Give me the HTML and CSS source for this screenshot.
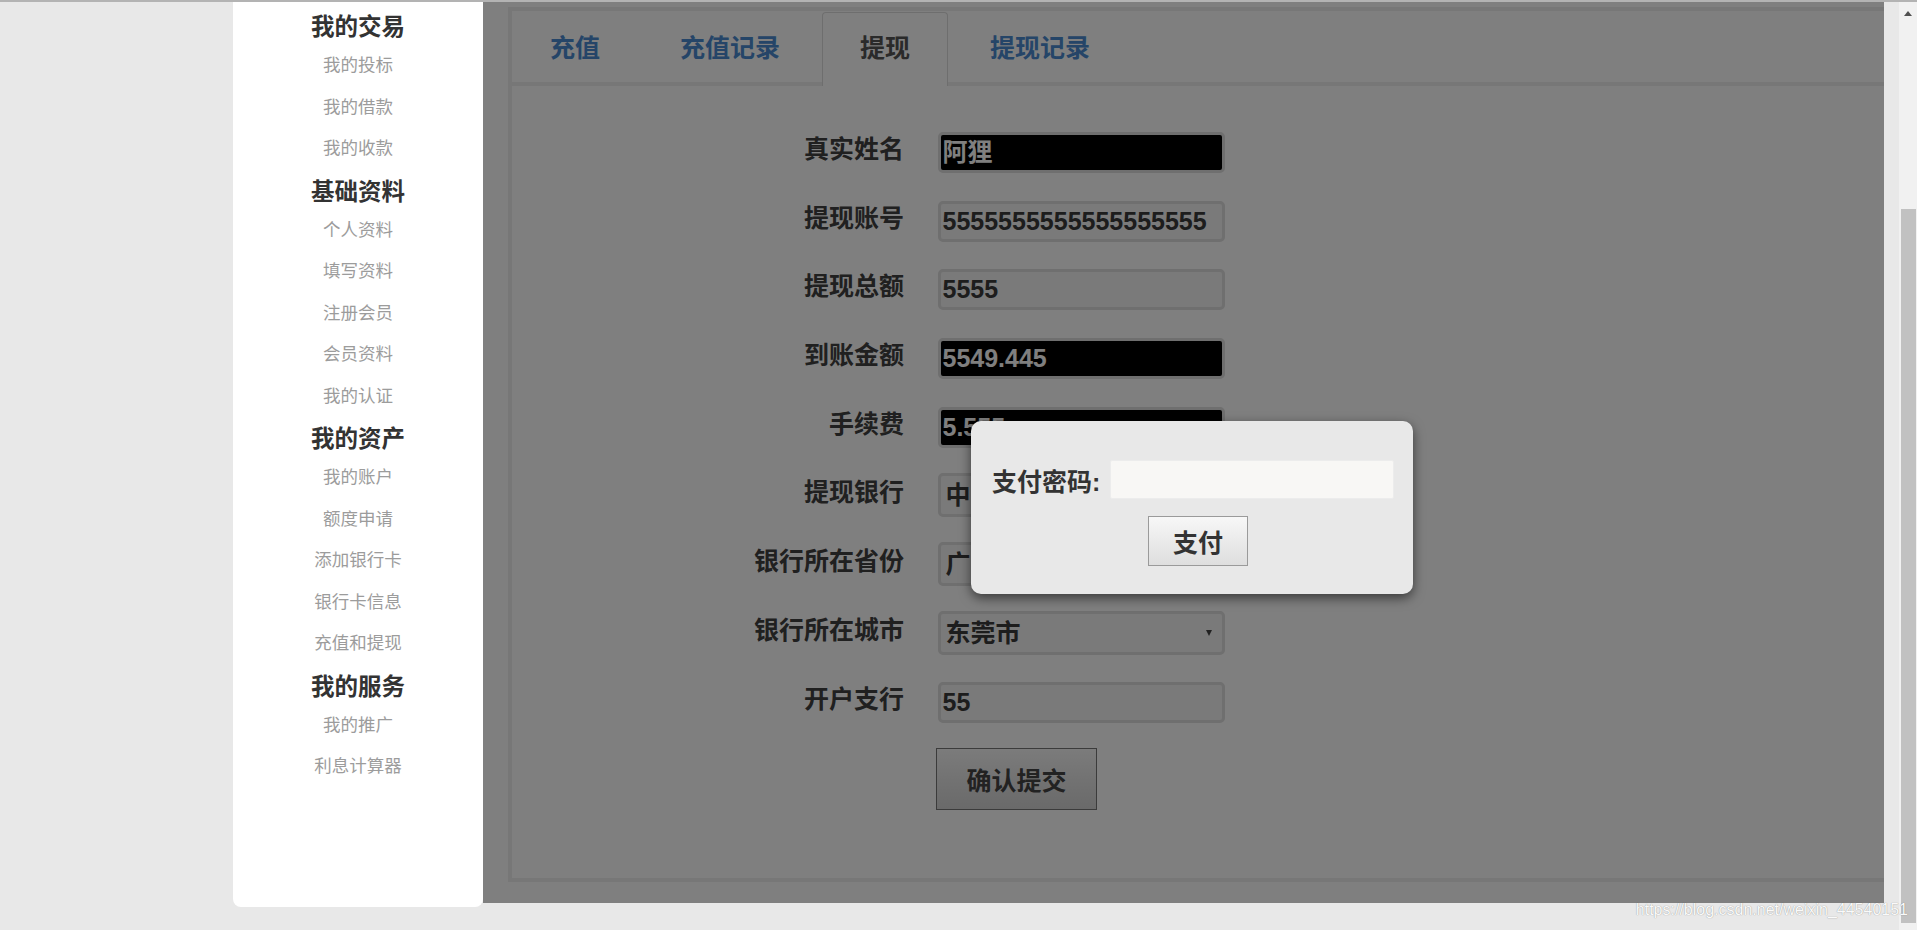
FILE: index.html
```html
<!DOCTYPE html>
<html lang="zh-CN">
<head>
<meta charset="utf-8">
<title>提现</title>
<link rel="stylesheet" href="styles.css">
</head>
<body>
<div class="window">
  <div class="page">
    <aside class="sidebar">
      <h3 class="side-title">我的交易</h3>
      <a class="side-link">我的投标</a>
      <a class="side-link">我的借款</a>
      <a class="side-link">我的收款</a>
      <h3 class="side-title">基础资料</h3>
      <a class="side-link">个人资料</a>
      <a class="side-link">填写资料</a>
      <a class="side-link">注册会员</a>
      <a class="side-link">会员资料</a>
      <a class="side-link">我的认证</a>
      <h3 class="side-title">我的资产</h3>
      <a class="side-link">我的账户</a>
      <a class="side-link">额度申请</a>
      <a class="side-link">添加银行卡</a>
      <a class="side-link">银行卡信息</a>
      <a class="side-link">充值和提现</a>
      <h3 class="side-title">我的服务</h3>
      <a class="side-link">我的推广</a>
      <a class="side-link">利息计算器</a>
    </aside>
    <main class="main">
      <div class="panel">
        <ul class="tabs">
          <li class="tab">充值</li>
          <li class="tab">充值记录</li>
          <li class="tab active">提现</li>
          <li class="tab">提现记录</li>
        </ul>
        <div class="form">
          <div class="label">真实姓名</div><div class="field dark">阿狸</div>
          <div class="label">提现账号</div><div class="field">5555555555555555555</div>
          <div class="label">提现总额</div><div class="field">5555</div>
          <div class="label">到账金额</div><div class="field dark">5549.445</div>
          <div class="label">手续费</div><div class="field dark">5.555</div>
          <div class="label">提现银行</div><div class="field select">中国银行</div>
          <div class="label">银行所在省份</div><div class="field select">广东省</div>
          <div class="label">银行所在城市</div><div class="field select">东莞市</div>
          <div class="label">开户支行</div><div class="field">55</div>
          <div class="label"></div><div class="actions"><button class="submit" type="button">确认提交</button></div>
        </div>
      </div>
      <div class="overlay"></div>
      <div class="modal">
        <div class="modal-row">
          <span class="modal-label">支付密码:</span>
          <span class="modal-input"></span>
        </div>
        <button class="pay" type="button">支付</button>
      </div>
    </main>
    <div class="gutter"></div>
  </div>
  <div class="scrollbar">
    <div class="sb-up"></div>
    <div class="sb-thumb"></div>
  </div>
</div>
<div class="watermark">https://blog.csdn.net/weixin_44540151</div>
</body>
</html>
```

FILE: styles.css
```css
* { box-sizing: border-box; }
html, body {
  margin: 0;
  height: 930px;
  overflow: hidden;
}
body {
  background: #e8e8e8;
  font-family: "Liberation Sans", "Noto Sans CJK SC", sans-serif;
  position: relative;
}
.window {
  display: flex;
  height: 930px;
  border-top: 2px solid #b3b3b3;
}
.page {
  flex: 1;
  display: flex;
  align-items: flex-start;
  padding-left: 233px;
}

/* sidebar */
.sidebar {
  width: 250px;
  height: 905px;
  background: #fff;
  border-radius: 0 0 8px 8px;
  display: flex;
  flex-direction: column;
  align-items: center;
  padding-top: 3px;
}
.side-title {
  margin: 4px 0 0;
  font-size: 23.5px;
  line-height: 36px;
  font-weight: bold;
  color: #333;
}
.side-link {
  font-size: 17.5px;
  line-height: 41.5px;
  color: #9c9c9c;
}

/* main */
.main {
  width: 1401px;
  height: 901px;
  background: #fff;
  position: relative;
  overflow: hidden;
}
.panel {
  margin: 5px -20px 0 25px;
  height: 875px;
  border: 4px solid #eee;
}
.tabs {
  display: flex;
  gap: 4px;
  margin: 0;
  padding: 1px 0 0;
  list-style: none;
  height: 75px;
  border-bottom: 4px solid #eee;
}
.tab {
  height: 70px;
  padding: 0 38px;
  line-height: 72px;
  font-size: 25px;
  font-weight: bold;
  color: #4a8ad0;
}
.tab.active {
  height: 74px;
  margin-bottom: -4px;
  padding: 0 37px;
  line-height: 70px;
  color: #555;
  background: #fff;
  border: 1px solid #dcdcdc;
  border-bottom: none;
  border-radius: 4px 4px 0 0;
}

.form {
  display: grid;
  grid-template-columns: 392px 287px;
  grid-auto-rows: 41px;
  column-gap: 33.5px;
  row-gap: 27.7px;
  padding-top: 46px;
}
.label {
  text-align: right;
  font-size: 25px;
  font-weight: bold;
  color: #404040;
  line-height: 34px;
}
.field {
  position: relative;
  height: 41px;
  border: 3px solid #dedede;
  border-radius: 5px;
  background: #f4f4f4;
  padding-left: 2px;
  font-size: 25px;
  font-weight: bold;
  line-height: 35px;
  color: #3a3a3a;
  white-space: nowrap;
  overflow: hidden;
}
.field.dark {
  background: #000;
  color: #fff;
}
.field.select {
  padding-left: 5px;
  height: 44px;
  margin-top: -2px;
  line-height: 38px;
}
.field.select::after {
  content: "";
  position: absolute;
  right: 10px;
  top: 16px;
  border-left: 3.5px solid transparent;
  border-right: 3.5px solid transparent;
  border-top: 6px solid #444;
}
.actions {
  margin-top: -2px;
  margin-left: -1.5px;
}
.submit {
  width: 161px;
  height: 62px;
  border: 1px solid #777;
  border-radius: 0;
  background: linear-gradient(#f7f7f7, #d4d4d4);
  font-family: "Liberation Sans", "Noto Sans CJK SC", sans-serif;
  font-size: 25px;
  font-weight: bold;
  color: #444;
  padding: 0;
}

.overlay {
  position: absolute;
  inset: 0;
  background: rgba(0, 0, 0, 0.5);
}

/* modal */
.modal {
  position: absolute;
  left: 488px;
  top: 419px;
  width: 442px;
  height: 173px;
  background: #e8e8e8;
  border-radius: 10px;
  box-shadow: 0 4px 12px rgba(0, 0, 0, 0.55);
  padding: 39px 19px 0 21px;
}
.modal-row {
  display: flex;
  align-items: center;
  gap: 10px;
  height: 39px;
}
.modal-label {
  font-size: 25px;
  font-weight: bold;
  color: #333;
  white-space: nowrap;
}
.modal-input {
  flex: 1;
  height: 39px;
  background: #f8f7f5;
  border: 1px solid #ececec;
  border-radius: 2px;
}
.pay {
  display: block;
  margin: 17px 0 0 156px;
  width: 100px;
  height: 50px;
  border: 1px solid #9a9a9a;
  border-radius: 0;
  background: linear-gradient(#f7f7f7, #dedede);
  font-family: "Liberation Sans", "Noto Sans CJK SC", sans-serif;
  font-size: 25px;
  font-weight: bold;
  color: #333;
  padding: 0;
}

.gutter {
  width: 15px;
}

/* fake scrollbar */
.scrollbar {
  width: 18px;
  background: #f1f1f1;
  display: flex;
  flex-direction: column;
  align-items: center;
  padding-top: 9px;
}
.sb-up {
  width: 0;
  height: 0;
  border-left: 4.5px solid transparent;
  border-right: 4.5px solid transparent;
  border-bottom: 5px solid #505050;
  margin-bottom: 193px;
}
.sb-thumb {
  width: 15px;
  height: 714px;
  background: #c1c1c1;
}

.watermark {
  position: absolute;
  right: 9px;
  top: 901px;
  font-family: "Liberation Sans", sans-serif;
  font-size: 16px;
  color: #fafafa;
  text-shadow: 0 0 1px rgba(0, 0, 0, 0.45);
  white-space: nowrap;
}
```
